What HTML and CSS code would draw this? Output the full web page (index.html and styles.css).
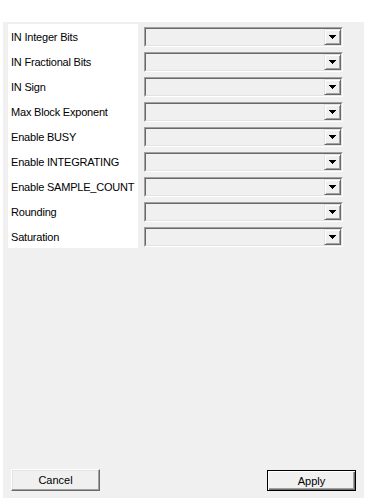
FILE: index.html
```html
<!DOCTYPE html>
<html lang="en">
<head>
    <meta charset="UTF-8">
    <meta name="viewport" content="width=device-width, initial-scale=1.0">
    <title>Block Parameters</title>
    <link rel="stylesheet" href="styles.css">
</head>
<body>

<div class="panel">
    <div class="fields">
        <div class="labels">
            <div class="label">IN Integer Bits</div>
            <div class="label">IN Fractional Bits</div>
            <div class="label">IN Sign</div>
            <div class="label">Max Block Exponent</div>
            <div class="label">Enable BUSY</div>
            <div class="label">Enable INTEGRATING</div>
            <div class="label">Enable SAMPLE_COUNT</div>
            <div class="label">Rounding</div>
            <div class="label">Saturation</div>
        </div>
        <div class="combos">
            <!-- disabled combo boxes, one per parameter -->
            <div class="combo"><div class="combo-inner"><span class="drop"><svg width="7" height="4"><polygon points="0,0 7,0 3.5,4"/></svg></span></div></div>
            <div class="combo"><div class="combo-inner"><span class="drop"><svg width="7" height="4"><polygon points="0,0 7,0 3.5,4"/></svg></span></div></div>
            <div class="combo"><div class="combo-inner"><span class="drop"><svg width="7" height="4"><polygon points="0,0 7,0 3.5,4"/></svg></span></div></div>
            <div class="combo"><div class="combo-inner"><span class="drop"><svg width="7" height="4"><polygon points="0,0 7,0 3.5,4"/></svg></span></div></div>
            <div class="combo"><div class="combo-inner"><span class="drop"><svg width="7" height="4"><polygon points="0,0 7,0 3.5,4"/></svg></span></div></div>
            <div class="combo"><div class="combo-inner"><span class="drop"><svg width="7" height="4"><polygon points="0,0 7,0 3.5,4"/></svg></span></div></div>
            <div class="combo"><div class="combo-inner"><span class="drop"><svg width="7" height="4"><polygon points="0,0 7,0 3.5,4"/></svg></span></div></div>
            <div class="combo"><div class="combo-inner"><span class="drop"><svg width="7" height="4"><polygon points="0,0 7,0 3.5,4"/></svg></span></div></div>
            <div class="combo"><div class="combo-inner"><span class="drop"><svg width="7" height="4"><polygon points="0,0 7,0 3.5,4"/></svg></span></div></div>
        </div>
    </div>

    <div class="actions">
        <button type="button" class="btn">Cancel</button>
        <button type="button" class="btn default">Apply</button>
    </div>
</div>

</body>
</html>
```

FILE: styles.css
```css
body {
    margin: 0;
    background: #fff;
    font-family: "Liberation Sans", Arial, sans-serif;
    font-size: 11px;
    color: #000;
}
.panel {
    margin: 22px 4px 0 3px;
    height: 476px;
    box-sizing: border-box;
    padding: 2px 8px 7px 5px;
    background: #f0f0f0;
    display: flex;
    flex-direction: column;
    justify-content: space-between;
}
.fields {
    display: flex;
    gap: 6px;
}
.labels {
    width: 130px;
    height: 224px;
    background: #fff;
}
.label {
    height: 25px;
    line-height: 26px;
    padding-left: 3px;
    letter-spacing: -0.2px;
    white-space: nowrap;
}
.combos {
    display: flex;
    flex-direction: column;
    gap: 5px;
    padding-top: 3px;
}
.combo {
    width: 197px;
    height: 18px;
    border: 1px solid;
    border-color: #a0a0a0 #fff #fff #a0a0a0;
}
.combo-inner {
    height: 16px;
    border: 1px solid;
    border-color: #696969 #e3e3e3 #e3e3e3 #696969;
    background: #f0f0f0;
    display: flex;
    justify-content: flex-end;
}
.drop {
    width: 13px;
    height: 12px;
    border: 1px solid;
    border-color: #e3e3e3 #696969 #696969 #e3e3e3;
    box-shadow: inset 1px 1px #fff, inset -1px -1px #a0a0a0;
    background: #f0f0f0;
    padding: 1px;
    display: flex;
    align-items: center;
    justify-content: center;
}
.drop svg {
    display: block;
    shape-rendering: crispEdges;
}
.actions {
    display: flex;
    justify-content: space-between;
    align-items: flex-end;
    padding-left: 3px;
}
.btn {
    width: 89px;
    height: 22px;
    margin: 0;
    padding: 0;
    font-family: "Liberation Sans", Arial, sans-serif;
    font-size: 11px;
    color: #000;
    background: #f0f0f0;
    border: 1px solid;
    border-color: #fff #696969 #696969 #fff;
    box-shadow: inset -1px -1px #a0a0a0, inset 1px 1px #e3e3e3;
}
.btn.default {
    height: 21px;
    border: 1px solid #000;
    box-shadow: inset 1px 1px #fff, inset -1px -1px #696969, inset -2px -2px #a0a0a0;
}
```
